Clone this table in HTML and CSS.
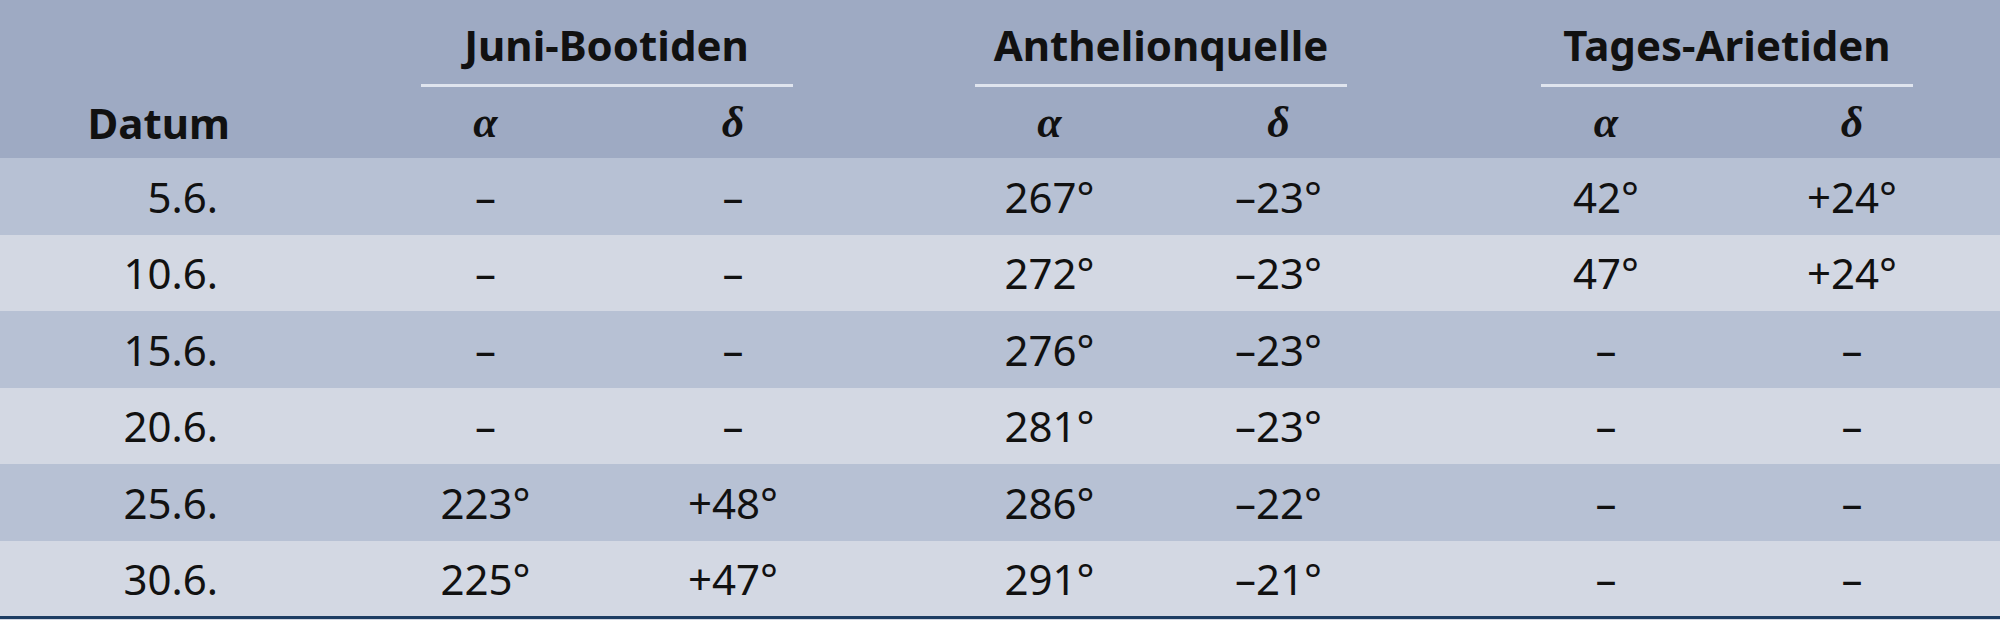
FILE: index.html
```html
<!DOCTYPE html>
<html lang="de">
<head>
<meta charset="utf-8">
<link rel="stylesheet" href="styles.css">
</head>
<body>
<table class="radiant">
  <colgroup>
    <col class="w-date">
    <col class="w-a1"><col class="w-d1">
    <col class="w-a2"><col class="w-d2">
    <col class="w-a3"><col class="w-d3">
  </colgroup>
  <thead>
    <tr class="group-row">
      <th></th>
      <th colspan="2" class="grp g1"><div class="grp-title">Juni-Bootiden</div></th>
      <th colspan="2" class="grp g2"><div class="grp-title">Anthelionquelle</div></th>
      <th colspan="2" class="grp g3"><div class="grp-title">Tages-Arietiden</div></th>
    </tr>
    <tr class="sub-row">
      <th class="date-head">Datum</th>
      <th class="greek">α</th><th class="greek pad1">δ</th>
      <th class="greek">α</th><th class="greek pad2">δ</th>
      <th class="greek">α</th><th class="greek pad3">δ</th>
    </tr>
  </thead>
  <tbody>
    <tr><td class="date">5.6.</td><td>–</td><td class="pad1">–</td><td>267°</td><td class="pad2">–23°</td><td>42°</td><td class="pad3">+24°</td></tr>
    <tr><td class="date">10.6.</td><td>–</td><td class="pad1">–</td><td>272°</td><td class="pad2">–23°</td><td>47°</td><td class="pad3">+24°</td></tr>
    <tr><td class="date">15.6.</td><td>–</td><td class="pad1">–</td><td>276°</td><td class="pad2">–23°</td><td>–</td><td class="pad3">–</td></tr>
    <tr><td class="date">20.6.</td><td>–</td><td class="pad1">–</td><td>281°</td><td class="pad2">–23°</td><td>–</td><td class="pad3">–</td></tr>
    <tr><td class="date">25.6.</td><td>223°</td><td class="pad1">+48°</td><td>286°</td><td class="pad2">–22°</td><td>–</td><td class="pad3">–</td></tr>
    <tr><td class="date">30.6.</td><td>225°</td><td class="pad1">+47°</td><td>291°</td><td class="pad2">–21°</td><td>–</td><td class="pad3">–</td></tr>
  </tbody>
</table>
</body>
</html>
```
FILE: styles.css
```css
html, body {
  margin: 0;
  padding: 0;
  background: #d3d8e3;
}

.radiant {
  width: 2000px;
  table-layout: fixed;
  border-collapse: collapse;
  font-family: "Noto Sans", "Open Sans", sans-serif;
  font-size: 42px;
  color: #111;
  border-bottom: 3px solid #1d3d63;
}

.w-date { width: 362px; }
.w-a1 { width: 247px; }
.w-d1 { width: 326px; }
.w-a2 { width: 229px; }
.w-d2 { width: 319px; }
.w-a3 { width: 246px; }
.w-d3 { width: 271px; }

.radiant th,
.radiant td {
  padding: 0;
  text-align: center;
  vertical-align: middle;
  white-space: nowrap;
}

.radiant thead {
  background: #9eaac3;
}

.group-row {
  height: 87px;
}

.radiant th.grp {
  vertical-align: bottom;
  font-weight: 700;
}

.radiant th.g1 { padding-right: 84px; }
.radiant th.g2 { padding-right: 96px; }
.radiant th.g3 { padding-right: 29px; }

.grp-title {
  width: 372px;
  margin: 0 auto;
  padding-bottom: 14px;
  border-bottom: 3px solid #dfe4ee;
  line-height: 50px;
}

.sub-row {
  height: 71px;
}

.radiant th.date-head {
  font-weight: 700;
  text-align: right;
  padding-right: 132px;
}

.radiant th.greek {
  font-family: "Liberation Serif", "DejaVu Serif", serif;
  font-style: italic;
  font-weight: 700;
  font-size: 44px;
}

.radiant .pad1 { padding-right: 78px; }
.radiant .pad2 { padding-right: 90px; }
.radiant .pad3 { padding-right: 25px; }

.radiant tbody tr {
  height: 76.5px;
}

.radiant tbody tr:nth-child(odd) {
  background: #b7c1d4;
}

.radiant tbody tr:nth-child(even) {
  background: #d3d8e3;
}

.radiant td.date {
  text-align: right;
  padding-right: 144px;
}
```
